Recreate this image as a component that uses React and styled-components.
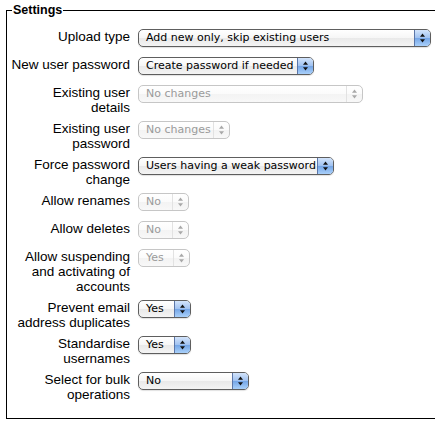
import React from 'react'
import styled, { createGlobalStyle } from 'styled-components'

const GlobalStyle = createGlobalStyle`
  html, body {
    margin: 0;
    padding: 0;
    background: #fff;
    overflow: hidden;
  }
`

const Fieldset = styled.fieldset`
  margin: 3px -20px 0 6px;
  padding: 11px 0 16px 5px;
  border: 1px solid #000;
  min-width: 0;
  font-family: 'Liberation Sans', Arial, sans-serif;
`

const Legend = styled.legend`
  padding: 0 1px;
  font-size: 12.5px;
  font-weight: bold;
  line-height: 15px;
  color: #000;
`

const Rows = styled.div`
  display: grid;
  grid-template-columns: 118px auto;
  column-gap: 8px;
  row-gap: 6px;
  justify-items: start;
  align-items: start;
`

const Label = styled.label`
  justify-self: end;
  min-height: 22px;
  font-size: 13.5px;
  line-height: 15px;
  text-align: right;
  white-space: nowrap;
  color: #000;
`

const SelectBox = styled.div`
  display: flex;
  align-items: stretch;
  box-sizing: border-box;
  width: ${(p) => p.$width}px;
  height: 18px;
  border: 1px solid ${(p) => (p.$disabled ? '#c6c6c6' : '#5e5e5e')};
  border-radius: 5px;
  overflow: hidden;
  background: ${(p) =>
    p.$disabled
      ? 'linear-gradient(#ffffff, #fbfbfb 50%, #f3f3f3 51%, #f8f8f8)'
      : 'linear-gradient(#ffffff, #f6f6f6 50%, #e9e9e9 51%, #f4f4f4)'};
  box-shadow: ${(p) => (p.$disabled ? 'none' : '0 1px 1px rgba(0,0,0,0.12)')};
`

const SelectText = styled.span`
  flex: 1;
  padding-left: 7px;
  font-family: 'DejaVu Sans', 'Liberation Sans', sans-serif;
  font-size: 11px;
  line-height: 16px;
  white-space: nowrap;
  overflow: hidden;
  color: ${(p) => (p.$disabled ? '#9a9a9a' : '#000')};
`

const Arrows = styled.span`
  display: flex;
  align-items: center;
  justify-content: center;
  width: 15px;
  border-left: 1px solid ${(p) => (p.$disabled ? '#e2e2e2' : '#5b76a8')};
  background: ${(p) =>
    p.$disabled
      ? 'transparent'
      : 'linear-gradient(#d3e4fb, #9fc1f0 50%, #74a5e6 51%, #a9d0fa)'};
`

const UpDown = ({ color }) => (
  <svg width="7" height="10" viewBox="0 0 7 10">
    <path d="M3.5 0.5 L6 3.8 L1 3.8 Z" fill={color} />
    <path d="M3.5 9.5 L6 6.2 L1 6.2 Z" fill={color} />
  </svg>
)

const Select = ({ value, width, disabled }) => (
  <SelectBox $width={width} $disabled={disabled}>
    <SelectText $disabled={disabled}>{value}</SelectText>
    <Arrows $disabled={disabled}>
      <UpDown color={disabled ? '#a8a8a8' : '#111'} />
    </Arrows>
  </SelectBox>
)

const settings = [
  { label: ['Upload type'], value: 'Add new only, skip existing users', width: 293 },
  { label: ['New user password'], value: 'Create password if needed', width: 176 },
  { label: ['Existing user', 'details'], value: 'No changes', width: 225, disabled: true },
  { label: ['Existing user', 'password'], value: 'No changes', width: 92, disabled: true },
  { label: ['Force password', 'change'], value: 'Users having a weak password', width: 196 },
  { label: ['Allow renames'], value: 'No', width: 51, disabled: true },
  { label: ['Allow deletes'], value: 'No', width: 51, disabled: true },
  { label: ['Allow suspending', 'and activating of', 'accounts'], value: 'Yes', width: 52, disabled: true },
  { label: ['Prevent email', 'address duplicates'], value: 'Yes', width: 53 },
  { label: ['Standardise', 'usernames'], value: 'Yes', width: 53 },
  { label: ['Select for bulk', 'operations'], value: 'No', width: 111 },
]

const App = () => (
  <>
    <GlobalStyle />
    <Fieldset>
      <Legend>Settings</Legend>
      <Rows>
        {settings.map((s) => (
          <React.Fragment key={s.label.join(' ')}>
            <Label>
              {s.label.map((line, i) => (
                <React.Fragment key={line}>
                  {i > 0 && <br />}
                  {line}
                </React.Fragment>
              ))}
            </Label>
            <Select value={s.value} width={s.width} disabled={s.disabled} />
          </React.Fragment>
        ))}
      </Rows>
    </Fieldset>
  </>
)

export default App
